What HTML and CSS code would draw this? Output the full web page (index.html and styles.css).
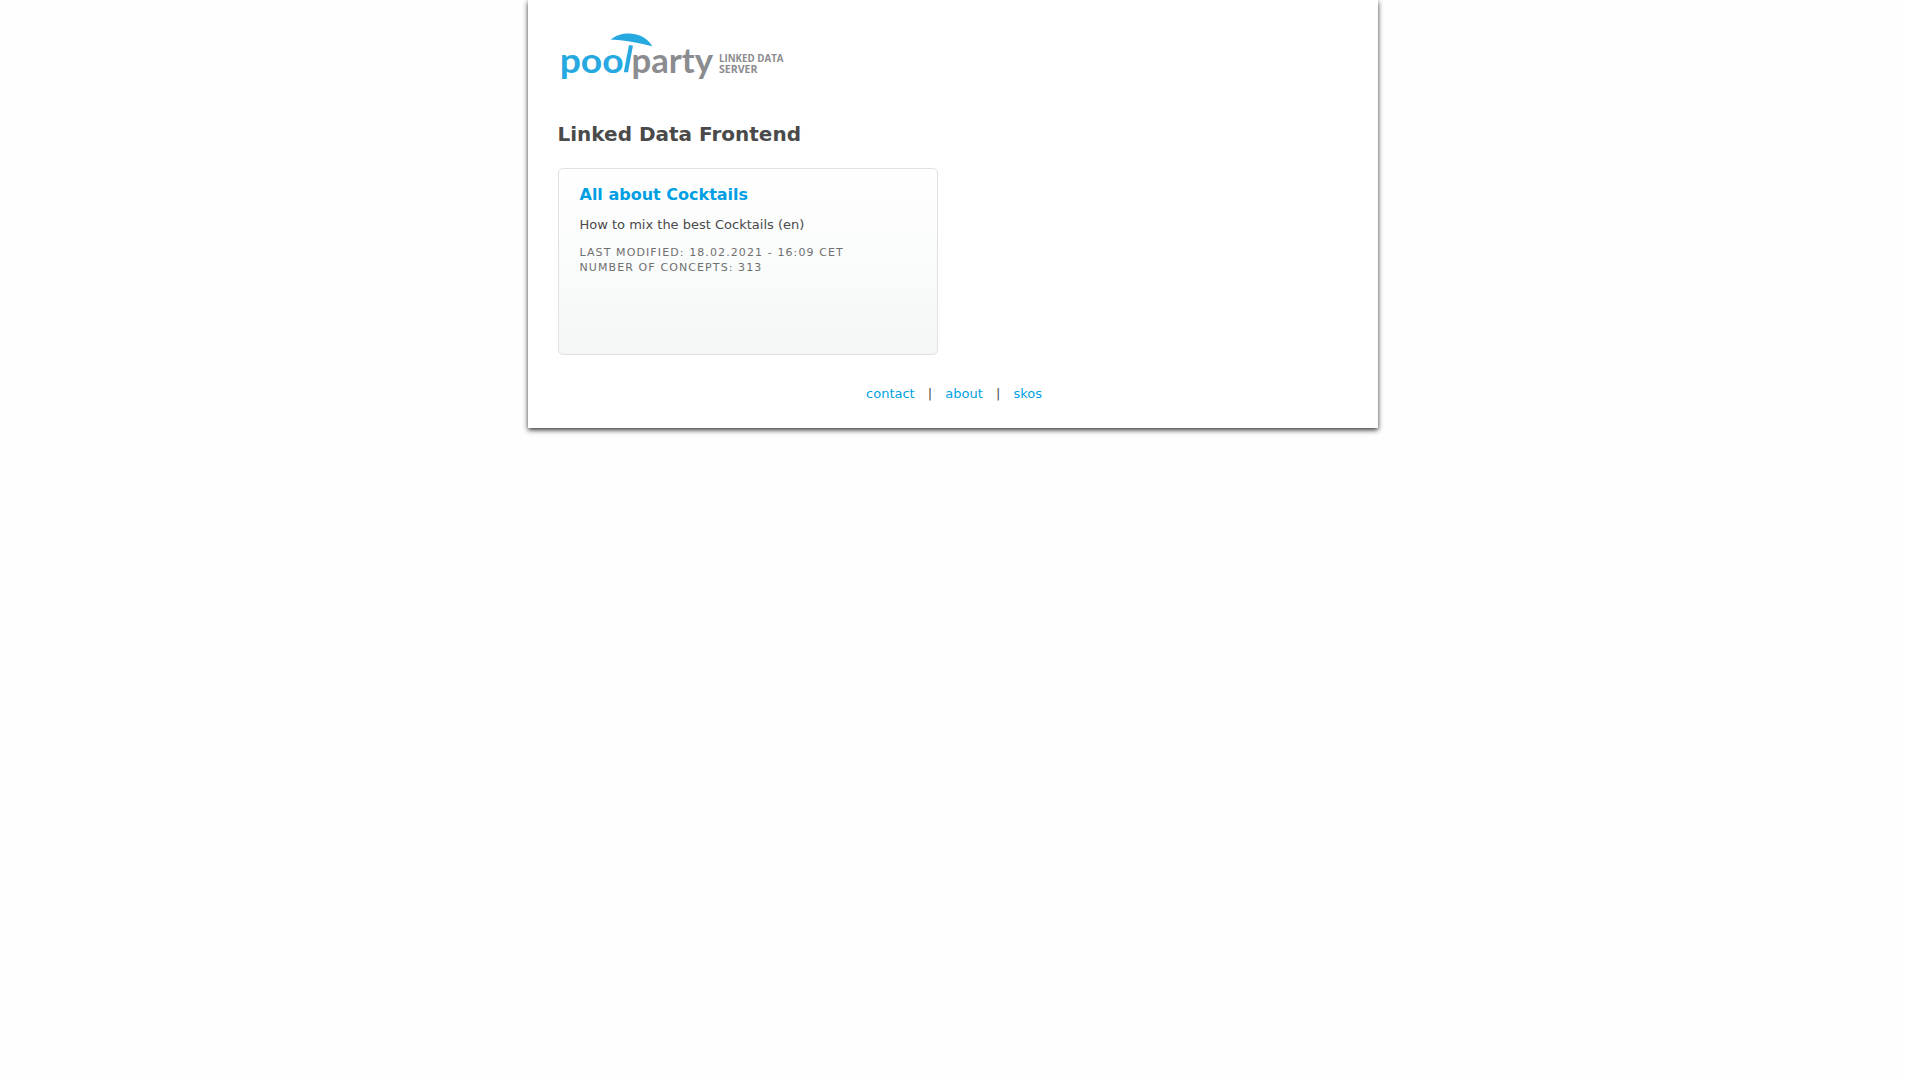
FILE: index.html
```html
<!DOCTYPE html>
<html lang="en">
<head>
<meta charset="utf-8">
<title>Linked Data Frontend</title>
<link rel="stylesheet" href="styles.css">
</head>
<body>
<div class="page">
  <header class="header">
    <svg class="logo" viewBox="0 0 250 75" role="img" aria-label="PoolParty Linked Data Server">
      <path class="blue" d="M60.500 19.500C69 12.500 82 11.800 91 16C96 18.500 100 22 102.300 26.300Q81 20.500 60.500 19.500Z"/>
      <path class="blue" d="M79 25L82.900 25.800L78 52.300H73.800Z"/>
      <text class="word blue" x="9.700" y="52.600" textLength="64" lengthAdjust="spacingAndGlyphs">poo</text>
      <text class="word grey" x="81.500" y="52.600" textLength="81.500" lengthAdjust="spacingAndGlyphs">party</text>
      <text class="tagline grey" x="169" y="42" textLength="64.500" lengthAdjust="spacingAndGlyphs">LINKED DATA</text>
      <text class="tagline grey" x="169" y="52.600" textLength="38.500" lengthAdjust="spacingAndGlyphs">SERVER</text>
    </svg>
  </header>
  <main>
    <h1 class="title">Linked Data Frontend</h1>
    <section class="card">
      <h2 class="card-title"><a href="#">All about Cocktails</a></h2>
      <p class="description">How to mix the best Cocktails (en)</p>
      <p class="meta">Last modified: 18.02.2021 - 16:09 CET<br>Number of concepts: 313</p>
    </section>
  </main>
  <footer class="footer"><a href="#">contact</a><span>|</span><a href="#">about</a><span>|</span><a href="#">skos</a></footer>
</div>
</body>
</html>
```

FILE: styles.css
```css
* { box-sizing: border-box; }
body {
  min-height: 100vh;
  margin: 0;
  background: #fefefe;
  color: #4a4a4a;
  font: 13px/15px "DejaVu Sans", sans-serif;
}
a { color: #009fe3; text-decoration: none; }
.page {
  width: 850px;
  height: 428px;
  margin: 0 auto;
  padding: 20px 30px 0;
  background: #fff;
  box-shadow: 0 2px 5px #333;
}
.logo { display: block; width: 250px; height: 75px; margin-left: -8px; }
.blue { fill: #25a9e0; }
.grey { fill: #8b8c8f; }
.word { font: 700 35px Lato, sans-serif; }
.tagline { font: 700 9.700px "Open Sans", sans-serif; }
.title { margin: 27px 0 0; font-size: 20px; line-height: 24px; }
.card {
  width: 380px;
  height: 187px;
  margin-top: 22px;
  padding: 16px 21px;
  border: 1px solid #e2e2e2;
  border-radius: 5px;
  background: linear-gradient(#fff, #f5f7f7);
}
.card-title { margin: 0; font-size: 16px; line-height: 20px; }
.description { margin: 12px 0 0; }
.meta {
  margin: 13px 0 0;
  color: #707070;
  font-size: 11px;
  letter-spacing: 1.100px;
  text-transform: uppercase;
}
.footer { display: flex; justify-content: center; gap: 13.100px; margin-top: 31px; padding-left: 3px; }
```
